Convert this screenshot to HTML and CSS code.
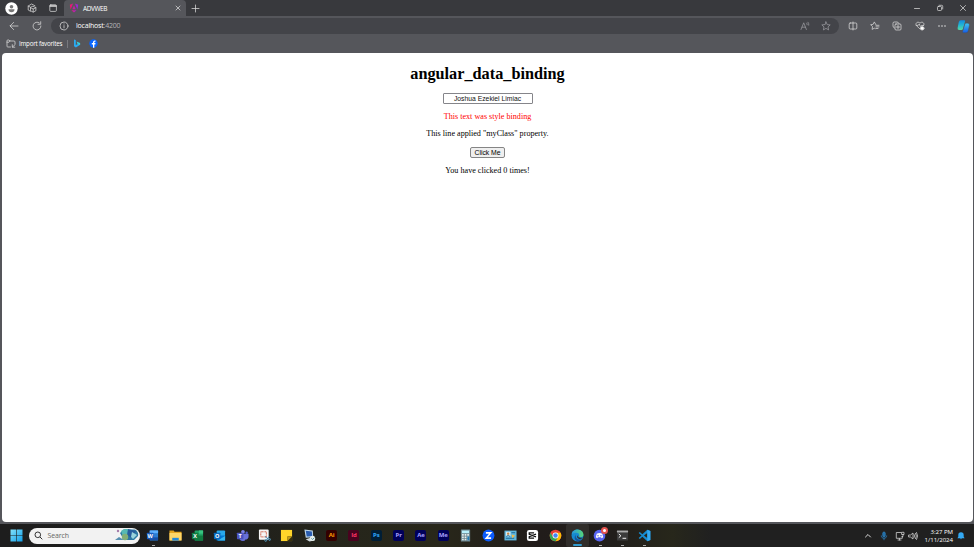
FILE: index.html
```html
<!DOCTYPE html>
<html lang="en">
<head>
<meta charset="utf-8">
<title>ADVWEB</title>
<link rel="stylesheet" href="styles.css">
</head>
<body>
<header class="tabs">
  <div class="profile"><svg width="13" height="13" viewBox="0 0 13 13"><circle cx="6.5" cy="6.5" r="6.2" fill="#fff"/><circle cx="6.5" cy="4.7" r="1.8" fill="#777"/><path d="M3.5 7.3h6c0 2-1.2 3-3 3s-3-1-3-3z" fill="#777"/></svg></div>
  <div class="tool"><svg width="10" height="10" viewBox="0 0 10 10" class="line"><path d="M3.5 8.3 1.2 7V3L4.6 1 8 2.8M1.2 3l2 1.1"/><path d="m6.2 3.4 2.7 1.3v3L6.2 9.1 3.5 7.7v-3zM3.5 4.7 6.2 6l2.7-1.3M6.2 6v3"/></svg></div>
  <div class="tool"><svg width="10" height="10" viewBox="0 0 10 10" class="line"><rect x="1.8" y="1.8" width="6.6" height="6.6" rx="1"/><path d="M2.2 2.9h5.8" stroke-width="1.5"/></svg></div>
  <div class="tab">
    <svg width="10" height="10" viewBox="0 0 10 10"><defs><linearGradient id="ng"><stop stop-color="#f51763"/><stop offset="1" stop-color="#8b29e8"/></linearGradient></defs><path d="M.8 1.8 4.1.6 1.6 6.5zM9.2 1.8 5.9.6l2.5 5.9zM5 2.3l1.6 3.9H3.4zM2.4 7.2h5.2L5 9.5z" fill="url(#ng)"/></svg>
    <span>ADVWEB</span>
    <svg class="line close" width="6" height="6" viewBox="0 0 6 6"><path d="m1 1 4 4m0-4L1 5"/></svg>
  </div>
  <svg class="line plus" width="9" height="9" viewBox="0 0 9 9"><path d="M4.5 1v7M1 4.5h7"/></svg>
  <div class="window-buttons">
    <svg class="line" width="8" height="8" viewBox="0 0 8 8"><path d="M1.5 4.5h5"/></svg>
    <svg class="line" width="8" height="8" viewBox="0 0 8 8"><rect x="1.5" y="2.5" width="4" height="4" rx=".8"/><path d="M3 1.3h2.7q1 0 1 1V5"/></svg>
    <svg class="line" width="8" height="8" viewBox="0 0 8 8"><path d="m1.5 1.5 5 5m0-5-5 5"/></svg>
  </div>
</header>
<nav class="toolbar">
  <svg class="line back" width="10" height="10" viewBox="0 0 10 10"><path d="M9 5H1l3.7-3.6M1 5l3.7 3.6"/></svg>
  <svg class="line reload" width="10" height="10" viewBox="0 0 10 10"><path d="M8.9 5A3.9 3.9 0 1 1 7.3 1.9M8.7.7v2.6H6"/></svg>
  <div class="address">
    <svg class="line" width="10" height="10" viewBox="0 0 10 10"><circle cx="5" cy="5" r="4"/><path d="M5 4.6v2.3M5 2.9v.2"/></svg>
    <span class="url">localhost<i>:4200</i></span>
    <svg class="line dim" width="11" height="10" viewBox="0 0 11 10"><path d="m1 8.5 2.7-6.7 2.7 6.7M2 6.2h3.4M6.7 2.1q.8.8.5 1.7M8 1.2q1.2 1.3.8 3"/></svg>
    <svg class="line dim" width="10" height="10" viewBox="0 0 10 10"><path d="m5 .9 1.2 2.7 3 .3L7 5.9l.6 3L5 7.4 2.4 8.9l.6-3L.8 3.9l3-.3z"/></svg>
  </div>
  <div class="actions">
    <svg class="line" width="10" height="10" viewBox="0 0 10 10"><rect x="1.2" y="2" width="7.6" height="6" rx="1"/><path d="M5 1v8"/></svg>
    <svg class="line" width="10" height="10" viewBox="0 0 10 10"><path d="M5.8 3.5 4.3.9 3.2 3.3.6 3.7l1.9 1.9-.4 2.8 2.3-1.2.7.4M6 4.3h3M6 5.9h3M6 7.5h2"/></svg>
    <svg class="line" width="10" height="10" viewBox="0 0 10 10"><path d="M2.4 7Q1 6.5 1 5V2.3Q1 1 2.3 1H5q1.4 0 1.9 1.4"/><rect x="3" y="3" width="6" height="6" rx="1"/><path d="M6 4.3v3.4M4.3 6h3.4"/></svg>
    <svg class="line" width="10" height="10" viewBox="0 0 10 10"><path d="M5 8 1.4 4.6C-.3 2.5 2.8-.3 5 2.2 7.2-.3 10.3 2.5 8.6 4.6M1.2 4.4h2l1-1.4 1.2 2.5 1-1h2"/><circle cx="7.2" cy="7.3" r="1.8" fill="#fff"/></svg>
    <svg width="10" height="10" viewBox="0 0 10 10" fill="#ddd"><circle cx="2" cy="5" r=".8"/><circle cx="5" cy="5" r=".8"/><circle cx="8" cy="5" r=".8"/></svg>
  </div>
  <svg class="copilot" width="13" height="13" viewBox="0 0 13 13"><defs><linearGradient id="cp" x2="0" y2="1"><stop stop-color="#1289dd"/><stop offset=".5" stop-color="#22b6d5"/><stop offset="1" stop-color="#58db9c"/></linearGradient><linearGradient id="cr" x2="0" y2="1"><stop stop-color="#41c7ef"/><stop offset="1" stop-color="#145be8"/></linearGradient></defs><path d="M3.6.2h3.6q1.1 0 .8 1.2L6 8.8Q5.7 10 4.5 10H2.2Q.2 10 .6 8l1.2-5.9Q2.2.2 3.6.2z" fill="url(#cp)"/><path d="M9.2 3.2h1.6q2 0 1.6 2l-1.1 5.3q-.4 2.3-2.2 2.3H6.6q-1.3 0-1-1.2l2.2-7.2q.4-1.2 1.4-1.2z" fill="url(#cr)" stroke="#45525e" stroke-width=".4"/></svg>
</nav>
<div class="favorites">
  <svg class="line" width="10" height="9" viewBox="0 0 10 9"><path d="M4.5 8H1.8Q1 8 1 7.2V1.8Q1 1 1.8 1H3l1 1h4q1 0 1 1v2M1 3.2h2L4 2M8.8 8.2H6.3V5.7M6.5 8 9 5.7"/></svg>
  <span>Import favorites</span><b class="divider"></b>
  <svg class="bing" width="8" height="9" viewBox="0 0 8 9"><path d="m1 .4 1.8.7v5l4-2.2v2L2.9 8.5 1 7.3z" fill="#2aaaf0"/><path d="m3.5 2.4 3.6 1.7v2L4.5 4.9z" fill="#36d0dc"/></svg>
  <svg width="9" height="9" viewBox="0 0 9 9"><circle cx="4.5" cy="4.5" r="4.2" fill="#0866ff"/><path d="M4 8.7V5.4H2.8V4H4V3.2Q4 1.5 5.7 1.5h.8v1.3h-.7q-.5 0-.5.6V4h1.2l-.2 1.4h-1v3.3z" fill="#fff"/></svg>
</div>
<main class="page">
  <h1>angular_data_binding</h1>
  <input class="name" type="text" value="Joshua Ezekiel Limiac" spellcheck="false">
  <p class="red">This text was style binding</p>
  <p class="property">This line applied "myClass" property.</p>
  <button class="click">Click Me</button>
  <p class="count">You have clicked 0 times!</p>
</main>
<footer class="taskbar">
  <svg class="start" width="13" height="13" viewBox="0 0 13 13"><defs><linearGradient id="win" x2="1" y2="1"><stop stop-color="#83e1fa"/><stop offset="1" stop-color="#109ee8"/></linearGradient></defs><path d="M.5.5h5.7v5.7H.5zM6.8.5h5.7v5.7H6.8zM.5 6.8h5.7v5.7H.5zM6.8 6.8h5.7v5.7H6.8z" fill="url(#win)"/></svg>
  <div class="search">
    <svg width="9" height="9" viewBox="0 0 9 9" fill="none" stroke="#333"><circle cx="3.8" cy="3.8" r="2.8"/><path d="m6 6 2.3 2.3"/></svg>
    <span>Search</span>
    <svg class="art" width="24" height="15" viewBox="0 0 24 15"><path d="M5 5 9 1.5h11Q24 4 23 8l-4 4H9z" fill="#2d78a2"/><path d="M6 3 9 1h5l1 5-6 5z" fill="#57b9b3"/><path d="m13 1 8 2-4 7-5-3z" fill="#285c9c"/><path d="m17 4 5 3-4 4-2-2z" fill="#9ad3dc"/><circle cx="10" cy="9" r="3.2" fill="#83ae75"/><circle cx="3" cy="3" r="1.2" fill="#a67ca9"/><path d="m0 12 4-3 5 3z" fill="#5790b1"/></svg>
  </div>
  <div class="apps">
    <div class="app running"><svg viewBox="0 0 14 14"><rect x="4" y="1.5" width="9" height="11" rx="1" fill="#2b7cd3"/><path d="M4 1.5h9v3H4z" fill="#5dafff"/><path d="M4 9h9v3H4z" fill="#174ea6"/><rect x="1" y="4" width="7" height="7" rx=".7" fill="#185abd"/><text x="4.5" y="9.7">W</text></svg></div>
    <div class="app"><svg viewBox="0 0 14 14"><path d="M.5 1.5h4.5l1 1.5h7.5v9H.5z" fill="#e4a11b"/><path d="M.5 4.2h13v8.3H.5z" fill="#ffd669"/><path d="M3.5 12.5V9.5h7v3z" fill="#2589d8"/></svg></div>
    <div class="app"><svg viewBox="0 0 14 14"><rect x="4" y="1.5" width="9" height="11" rx="1" fill="#21a366"/><path d="M8.5 1.5H13V5H8.5z" fill="#37c481"/><path d="M4 7h9v5.5H4z" fill="#107c41"/><rect x="1" y="4" width="7" height="7" rx=".7" fill="#107c41"/><text x="4.5" y="9.7">X</text></svg></div>
    <div class="app"><svg viewBox="0 0 14 14"><rect x="4" y="1.5" width="9" height="10" rx="1" fill="#28a8ea"/><path d="M4 7h9v5.5H4z" fill="#0078d4"/><path d="m5 12.5 8-5v5z" fill="#36b7ef"/><rect x="1" y="4" width="7" height="7" rx=".7" fill="#0868bd"/><text x="4.5" y="9.7">O</text></svg></div>
    <div class="app"><svg viewBox="0 0 14 14"><circle cx="7.5" cy="3" r="2" fill="#7b83eb"/><circle cx="11.5" cy="4" r="1.3" fill="#5059c9"/><path d="M4 5h9.5v4q-1 3-3 2-1 2-3 2-4 0-4-5z" fill="#6870d8"/><rect x="1" y="4" width="7" height="7" rx=".7" fill="#4b53bc"/><text x="4.5" y="9.7">T</text></svg></div>
    <div class="app"><svg viewBox="0 0 14 14"><rect x="1" y=".5" width="10.5" height="11" rx="1" fill="#f6f6f6"/><rect x="3" y="3" width="6" height="5.5" fill="none" stroke="#cc4f34" stroke-dasharray="1 .5"/><path d="m7.5 8 5 4M12 8l-3 4" stroke="#3b83af"/><circle cx="8.3" cy="12.3" r="1" fill="none" stroke="#5699bd"/><circle cx="12.5" cy="11.3" r="1" fill="none" stroke="#5699bd"/></svg></div>
    <div class="app"><svg viewBox="0 0 14 14"><path d="M1 1h12v12H1z" fill="#ffd52a"/><path d="M8 8h5v5H8z" fill="#37310f"/><path d="M8 13V8h5z" fill="#c59d16"/></svg></div>
    <div class="app"><svg viewBox="0 0 14 14"><path d="m1.5.5 9 1 .5 7.5-8 .5z" fill="#bdd6e8"/><path d="m3 2 6.5.7.5 5-6 .5z" fill="#295caf"/><path d="m3 11 7-2 3 3-6 1.5z" fill="#d3dce0"/><circle cx="10.3" cy="10" r="2.8" fill="#e6eee9"/><path d="m9 10 1.3 1.3 2-2" stroke="#4d8b9c" fill="none"/></svg></div>
    <div class="app"><span class="adobe ai">Ai</span></div>
    <div class="app"><span class="adobe id">Id</span></div>
    <div class="app"><span class="adobe ps">Ps</span></div>
    <div class="app"><span class="adobe pr">Pr</span></div>
    <div class="app"><span class="adobe pr">Ae</span></div>
    <div class="app"><span class="adobe pr">Me</span></div>
    <div class="app"><svg viewBox="0 0 14 14"><rect x="2" y=".5" width="10" height="13" rx=".7" fill="#6f8991"/><path d="M3.2 1.7h7.6v2.8H3.2z" fill="#b9f0fb"/><path d="M3.3 6.3h7.4M3.3 8.8h7.4M3.3 11.3h7.4" stroke="#e7eeee" stroke-width="1.7" stroke-dasharray="1.8 1"/><path d="M9 8h2v4.2H9z" fill="#237bb3"/></svg></div>
    <div class="app"><svg viewBox="0 0 14 14"><circle cx="7" cy="7" r="6.4" fill="#0b5cff"/><path d="M4.2 4.2h5.2L4.6 9.8h5.2" fill="none" stroke="#fff" stroke-width="1.7"/></svg></div>
    <div class="app"><svg viewBox="0 0 14 14"><rect x=".5" y="1.7" width="13" height="10.6" fill="#61b6dc"/><path d="M2 3h5v5H2z" fill="#d7edf4"/><circle cx="4.5" cy="5" r="1.3" fill="#c88846"/><path d="M2.4 8q2-2 4.2 0M8 4h4M2 10h9" stroke="#1b6795" fill="none"/><path d="m8 6 4 1-3 3z" fill="#f0bb4a"/></svg></div>
    <div class="app"><svg viewBox="0 0 14 14"><rect x="1" y="1" width="12" height="12" rx="2.4" fill="#fff"/><path d="M8.7 4.2H3.5v1.6l7.3 2.6M8.7 9.8H3.5V8.2l7.3-2.6" fill="none" stroke="#111" stroke-width="1.4"/></svg></div>
    <div class="app"><svg viewBox="0 0 14 14"><circle cx="7" cy="7" r="6.3" fill="#e94235"/><path d="M7 4h5.5A6.3 6.3 0 0 1 7 13.3l2.7-4.7z" fill="#fbbc05"/><path d="M1.5 4 4.3 8.6 7 10.2 9.7 8.6 7 13.3A6.3 6.3 0 0 1 1.5 4z" fill="#34a853"/><circle cx="7" cy="7" r="3.2" fill="#fff"/><circle cx="7" cy="7" r="2.4" fill="#4285f4"/></svg></div>
    <div class="app selected"><svg viewBox="0 0 14 14"><defs><linearGradient id="edge" x2="1"><stop stop-color="#2497e2"/><stop offset="1" stop-color="#58d675"/></linearGradient></defs><circle cx="7" cy="7" r="6.4" fill="#168bd0"/><path d="M.7 6C1 2 4 .5 7 .5c4 0 6.5 3.2 6.4 5.5Q13.3 9 10.3 9 8.2 9 8.7 7.4 9.5 4 5.3 4 2 4 .7 6z" fill="url(#edge)"/><path d="M5.3 6Q4.2 9.7 7.5 11q2.5 1 4.8-.6Q10.3 13.7 6.7 13.3 1.8 10.5 5.3 6z" fill="#155399"/><path d="M7.8 6.8q-1 2.7 2.6 2.7l2.2-.2.2.4Q8 12 6.6 8.9q-.2-1.5 1.2-2.1z" fill="#302d2a"/></svg></div>
    <div class="app running"><svg viewBox="0 0 14 14"><circle cx="7" cy="7.2" r="6.3" fill="#5865f2"/><path d="M4 5q3-1.3 6 0l1 4-1.6 1-.8-1H5.4l-.8 1L3 9z" fill="#fff"/><circle cx="5.4" cy="7.2" r=".8" fill="#5865f2"/><circle cx="8.6" cy="7.2" r=".8" fill="#5865f2"/></svg><b class="badge"></b></div>
    <div class="app running"><svg viewBox="0 0 14 14"><rect x="1" y="1.5" width="12" height="11" rx="1" fill="#3b3b3b"/><path d="M1 1.7h12v2H1z" fill="#aaa"/><path d="m3 5.3 2.3 2L3 9.3m4 .7h4" stroke="#fff" fill="none"/></svg></div>
    <div class="app running"><svg viewBox="0 0 14 14"><path d="m10 .7 3.3 1.5v9.6L10 13.3l-5.3-5L2 10.7l-1.3-.9L3.8 7 .7 4.2 2 3.3l2.7 2.4z" fill="#168bd0"/><path d="M10 4.3v5.4L6.4 7z" fill="#26251b"/><path d="m10 .7 3.3 1.5v9.6L10 13.3z" fill="#35aaf0"/></svg></div>
  </div>
  <div class="tray">
    <svg width="8" height="8" viewBox="0 0 8 8" class="line up"><path d="m1.5 5 2.5-2.5L6.5 5"/></svg>
    <svg width="8" height="10" viewBox="0 0 8 10" fill="none" stroke="#287fc0" stroke-width=".8"><rect x="2.8" y="1" width="2.4" height="5" rx="1.2" fill="#246ca0"/><path d="M1.3 4.5C1.3 8.3 6.7 8.3 6.7 4.5M4 7.5v1.7"/></svg>
    <svg width="10" height="10" viewBox="0 0 10 10" class="line network"><path d="M6 1.5H1.3v5.8h6V5.5M3 9h3M4.5 7.5V9M7 1.3h2v2.2H7zM8 3.5v2H7"/></svg>
    <svg width="10" height="10" viewBox="0 0 10 10" class="line volume"><path d="M1 4h1.5L5 2v6L2.5 6H1zM6.2 3.5q1 1.5 0 3M7.5 2.3q2 2.7 0 5.4M8.6 1.5q2.2 3.5 0 7"/></svg>
    <div class="clock"><span>3:27 PM</span><span>1/11/2024</span></div>
    <svg class="bell" width="8" height="9" viewBox="0 0 8 9"><path d="M1.3 4a2.7 2.7 0 0 1 5.4 0v1.8l.9 1.5H.4l.9-1.5zM3 7.6h2Q4 9 3 7.6z" fill="#34aaf4"/></svg>
  </div>
</footer>
</body>
</html>
```
FILE: styles.css
```css
* { box-sizing: border-box; }
body { margin: 0; width: 974px; height: 547px; overflow: hidden; display: flex; flex-direction: column; background: #55565b; color: #fff; font-family: "Open Sans", sans-serif; font-size: 7px; }
svg { display: block; flex: none; }
.line { fill: none; stroke: #dadada; stroke-width: .75; stroke-linecap: round; stroke-linejoin: round; }
.tabs { height: 16px; flex: none; background: #38393d; display: flex; align-items: center; }
.profile { width: 22px; padding-left: 5px; }
.tool { width: 21px; padding-left: 5px; }
.tab { width: 122px; height: 16px; padding: 0 5px; background: #55565b; border-radius: 4px 4px 0 0; display: flex; align-items: center; font-size: 6.5px; letter-spacing: -.4px; gap: 4px; }
.tab .close { margin-left: auto; }
.plus { margin-left: 5px; }
.window-buttons { margin-left: auto; padding-right: 7px; display: flex; gap: 15px; }
.toolbar { height: 20px; flex: none; display: flex; align-items: center; }
.back { margin-left: 9px; }
.reload { margin-left: 13px; }
.address { width: 788px; height: 16px; margin-left: 9px; border-radius: 8px; background: #434449; display: flex; align-items: center; padding: 0 8px; }
.url { margin: 0 auto 0 7px; font-size: 7px; line-height: 10px; letter-spacing: -.2px; }
.url i { color: #b5b5b8; font-style: normal; }
.dim { stroke: #9b9ba0; margin-left: 10px; }
.actions { width: 112px; margin-left: 2.5px; display: flex; justify-content: space-around; }
.copilot { margin-left: 3.5px; }
.favorites { height: 17px; flex: none; padding: 0 0 2px 6px; display: flex; align-items: center; font-size: 6.2px; letter-spacing: -.2px; }
.favorites span { margin-left: 3px; width: 44px; white-space: nowrap; }
.divider { width: 1px; height: 8px; background: #78797e; margin: 0 5px 0 4px; }
.bing { margin-right: 8px; }
.page { width: 971px; height: 469px; margin: 0 0 2px 2px; flex: none; border-radius: 4px; background: #fff; color: #000; display: flex; flex-direction: column; align-items: center; font-family: "Liberation Serif", serif; font-size: 8.15px; }
.page h1 { margin: 12px 0 0; font-size: 16.25px; line-height: 19px; }
.name { width: 90px; height: 11px; margin-top: 9px; padding: 0; border: 1px solid #85858a; border-radius: 1px; text-align: center; font: 6.8px "Liberation Sans", sans-serif; color: #111; }
.page p { margin: 0; line-height: 10px; }
.page .red { color: #f00; margin-top: 8px; }
.page .property { margin-top: 7px; }
.click { width: 35px; height: 11px; margin-top: 8px; padding: 0; border: 1px solid #858585; border-radius: 2px; background: #efefef; font: 6.8px/8px "Liberation Sans", sans-serif; color: #000; }
.page .count { margin-top: 8px; }
.taskbar { height: 23px; flex: none; display: flex; align-items: center; background: linear-gradient(90deg, #1d1d1d 0, #1e1e1c 22%, #25251b 34%, #28271a 45%, #211c1a 55%, #211e1b 63%, #27271b 69%, #202020 73%, #202020 100%); }
.start { margin-left: 10px; }
.search { width: 111px; height: 16px; margin-left: 6px; padding: 0 1px 0 5px; border-radius: 8px; background: #f2f2f2; display: flex; align-items: center; color: #666; font-size: 7px; }
.search span { margin: 0 auto 0 4.5px; letter-spacing: -.1px; }
.apps { display: grid; grid-template-columns: repeat(23, 22.35px); margin-left: 1.7px; }
.app { height: 23px; position: relative; display: flex; align-items: center; justify-content: center; }
.app > svg { width: 13px; height: 13px; }
.app text { font: bold 6px "Open Sans", sans-serif; text-anchor: middle; fill: #fff; }
.running::after, .selected::after { content: ""; position: absolute; bottom: 1px; left: 10px; width: 3px; height: 1px; background: #aaa; }
.selected { background: #302d2a; border-radius: 2px; }
.selected::after { left: 7px; width: 9px; height: 2px; border-radius: 1px; background: #329bcf; }
.adobe { width: 11px; height: 11px; border-radius: 2px; font-size: 6px; line-height: 11px; font-weight: 700; text-align: center; letter-spacing: -.1px; }
.ai { background: #330000; color: #ff9a00; }
.id { background: #49021f; color: #ff3366; }
.ps { background: #001e36; color: #31a8ff; }
.pr { background: #00005b; color: #a8a2ff; }
.badge { position: absolute; right: 3px; top: 3px; width: 7px; height: 7px; border-radius: 50%; background: #fff; border: 2px solid #e45350; }
.tray { margin-left: auto; display: flex; align-items: center; padding-right: 9px; }
.up { margin-right: 8px; stroke-width: 1; }
.network { margin-left: 7px; }
.volume { margin-left: 3px; }
.clock { width: 35px; display: flex; flex-direction: column; align-items: flex-end; font-size: 6.1px; line-height: 8px; white-space: nowrap; letter-spacing: -.05px; }
.bell { margin-left: 4px; }
```
